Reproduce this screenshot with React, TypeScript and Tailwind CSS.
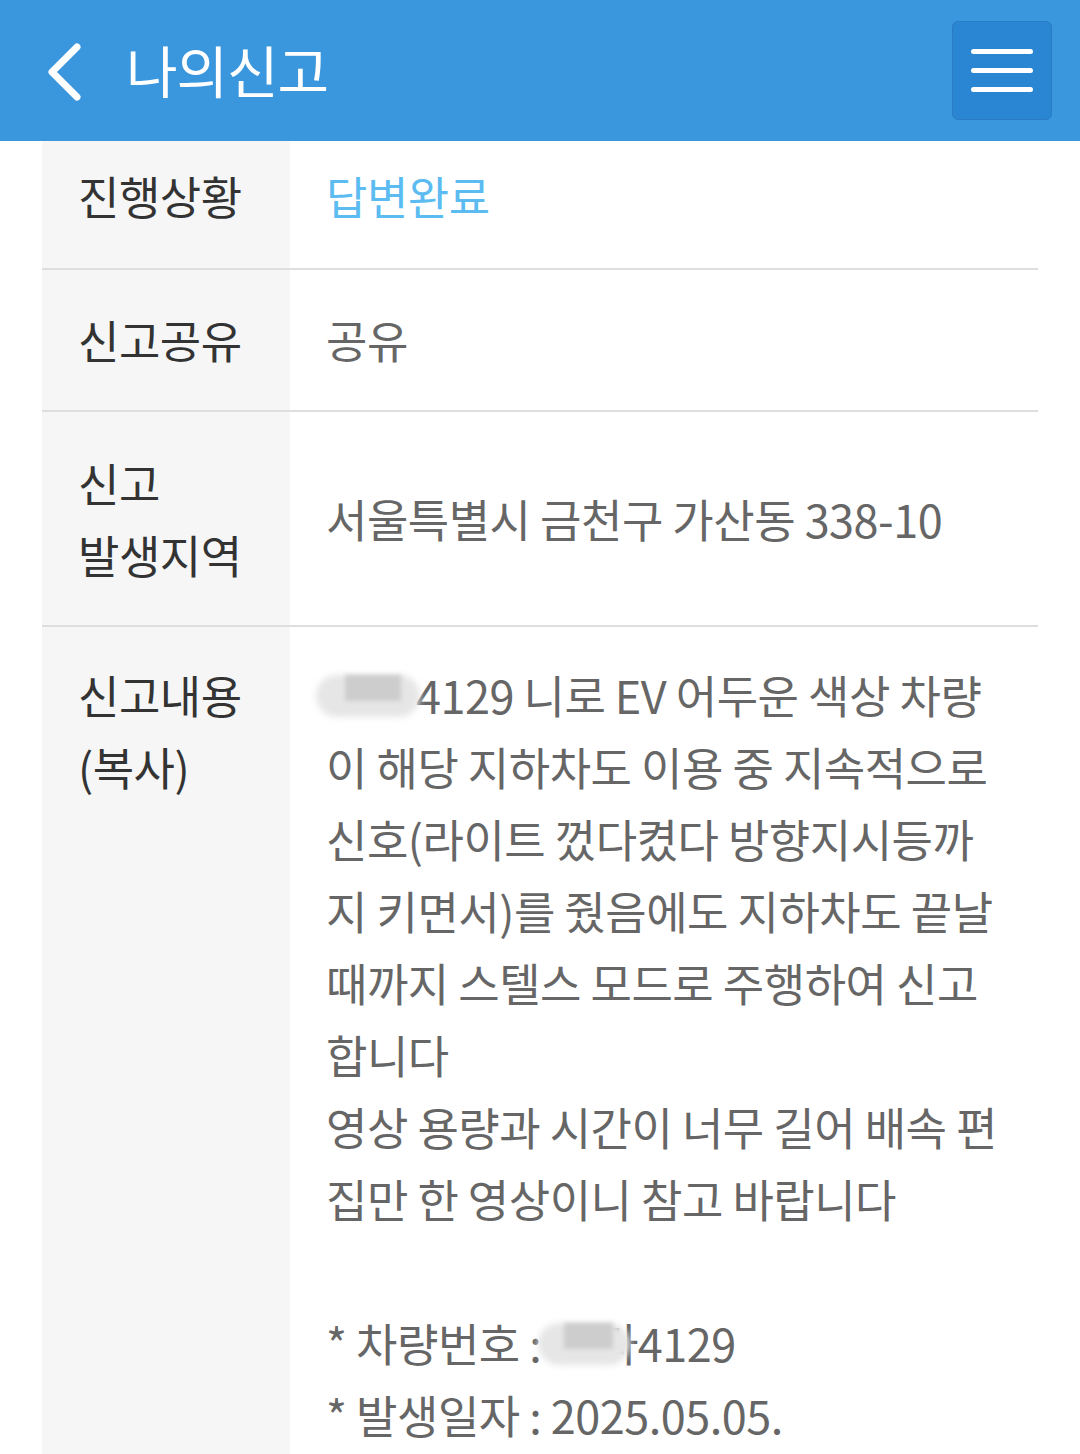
import React from 'react'

const font = { fontFamily: '"Noto Sans CJK KR", "Noto Sans", sans-serif' }

function Blur({ className = '' }: { className?: string }) {
  return (
    <span className={`absolute top-[12px] h-[50px] ${className}`}>
      <span className="absolute inset-x-0 top-[4px] h-[42px] rounded-full bg-[#e6e6e6] blur-[3px]" />
      <span className="absolute left-[28%] right-[18%] top-[4px] h-[26px] bg-[#cdcdcd] blur-[2px]" />
    </span>
  )
}

function Row({ label, children, className = '' }: { label: React.ReactNode; children: React.ReactNode; className?: string }) {
  return (
    <div className={`flex border-b-2 border-[#dedede] ${className}`}>
      <div className="w-[248px] shrink-0 bg-[#f6f6f6] pl-[36px] text-[#333] flex">{label}</div>
      <div className="flex-1 pl-[36px] pr-[20px] flex">{children}</div>
    </div>
  )
}

export default function App() {
  const lines = [
    '이 해당 지하차도 이용 중 지속적으로',
    '신호(라이트 껐다켰다 방향지시등까',
    '지 키면서)를 줬음에도 지하차도 끝날',
    '때까지 스텔스 모드로 주행하여 신고',
    '합니다',
    '영상 용량과 시간이 너무 길어 배속 편',
    '집만 한 영상이니 참고 바랍니다',
  ]

  return (
    <div className="w-[1080px] h-[1454px] overflow-hidden bg-white" style={font}>
      <header className="h-[141px] bg-[#3a97de] flex items-center pl-[44px] pr-[28px]">
        <svg width="40" height="60" viewBox="0 0 40 60" className="mt-[2px]">
          <path d="M33 5 L8 30 L33 55" fill="none" stroke="white" strokeWidth="7" strokeLinecap="round" strokeLinejoin="round" />
        </svg>
        <h1 className="ml-[42px] text-white text-[56px] leading-none tracking-[-1px] mb-[4px]">나의신고</h1>
        <button className="ml-auto w-[100px] h-[99px] rounded-[6px] bg-[#2a85d2] border border-[#2a7cc4] flex flex-col items-center justify-center gap-[14px] -mt-[1px]">
          <span className="block w-[62px] h-[5px] rounded-full bg-white" />
          <span className="block w-[62px] h-[5px] rounded-full bg-white" />
          <span className="block w-[62px] h-[5px] rounded-full bg-white" />
        </button>
      </header>

      <div className="mx-[42px] text-[45px] leading-[72px] tracking-[-0.5px]">
        <Row className="h-[129px]" label={<span className="self-center pb-[18px]">진행상황</span>}>
          <span className="self-center pb-[18px] text-[#5cbcf2]">답변완료</span>
        </Row>
        <Row className="h-[142px]" label={<span className="self-center">신고공유</span>}>
          <span className="self-center text-[#666]">공유</span>
        </Row>
        <Row className="h-[215px]" label={<span className="self-center">신고<br />발생지역</span>}>
          <span className="self-center text-[#666]">서울특별시 금천구 가산동 338-10</span>
        </Row>
        <div className="flex">
          <div className="w-[248px] shrink-0 bg-[#f6f6f6] pl-[36px] text-[#333] pt-[32px] h-[830px]">
            신고내용<br />(복사)
          </div>
          <div className="flex-1 pl-[36px] pt-[32px] text-[#666] whitespace-nowrap">
            <div className="relative">
              <span className="inline-block w-[90px]" />4129 니로 EV 어두운 색상 차량
              <Blur className="-left-[10px] w-[104px]" />
            </div>
            {lines.map((l) => (
              <div key={l}>{l}</div>
            ))}
            <div>&nbsp;</div>
            <div className="relative">
              * 차량번호 : <span className="inline-block w-[46px]" />라4129
              <Blur className="left-[212px] w-[92px]" />
            </div>
            <div>* 발생일자 : 2025.05.05.</div>
          </div>
        </div>
      </div>
    </div>
  )
}
